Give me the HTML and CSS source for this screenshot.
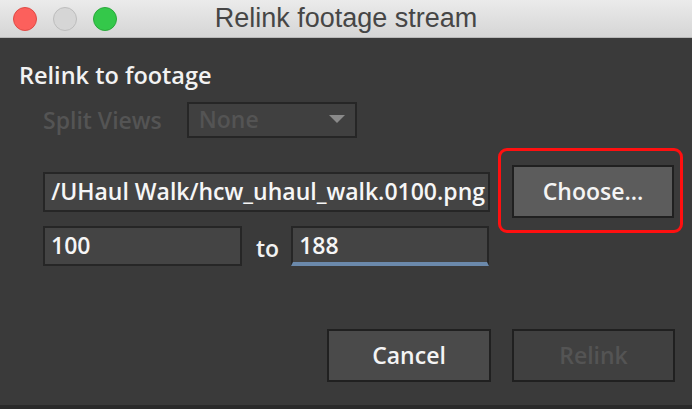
FILE: index.html
```
<!DOCTYPE html>
<html lang="en">
<head>
    <meta charset="UTF-8">
    <title>Relink footage stream</title>
    <link rel="stylesheet" href="styles.css">
</head>
<body>
    <div class="window">
        <div class="titlebar">
            <div class="lights">
                <span class="light close"></span>
                <span class="light minimize"></span>
                <span class="light zoom"></span>
            </div>
            <div class="title">Relink footage stream</div>
            <div></div>
        </div>

        <div class="dialog">
            <h2 class="heading">Relink to footage</h2>

            <div class="split-row">
                <span class="split-label">Split Views</span>
                <div class="select">
                    <span>None</span>
                    <svg class="arrow" width="16" height="8" viewBox="0 0 16 8"><path d="M0 0 L16 0 L8 8 Z" fill="#8a8a8a"/></svg>
                </div>
            </div>

            <div class="file-area">
                <div class="fields">
                    <div class="field path"><span>/UHaul Walk/hcw_uhaul_walk.0100.png</span></div>
                    <div class="range-row">
                        <div class="field start"><span>100</span></div>
                        <span class="to">to</span>
                        <div class="field end focused"><span>188</span></div>
                    </div>
                </div>
                <div class="highlight">
                    <button class="btn choose">Choose...</button>
                </div>
            </div>

            <div class="actions">
                <button class="btn cancel">Cancel</button>
                <button class="btn relink" disabled>Relink</button>
            </div>
        </div>
    </div>
</body>
</html>
```

FILE: styles.css
```
* { margin: 0; padding: 0; box-sizing: border-box; }
body { width: 692px; height: 409px; overflow: hidden; background: #2a2a2a; font-family: "Open Sans", sans-serif; }
.window { height: 405px; display: flex; flex-direction: column; background: #3a3a3a; }

.titlebar { height: 38px; flex-shrink: 0; display: grid; grid-template-columns: 1fr auto 1fr; align-items: center; background: linear-gradient(#ebebeb, #d5d5d5); border-bottom: 1px solid #b8b8b8; }
.lights { display: flex; gap: 16px; padding-left: 13px; }
.light { width: 24px; height: 24px; border-radius: 50%; }
.light.close { background: #fc605c; border: 1px solid #df4a45; }
.light.minimize { background: #d6d6d6; border: 1px solid #bdbdbd; }
.light.zoom { background: #34c84a; border: 1px solid #2aa83b; }
.title { font-family: "Liberation Sans", Arial, sans-serif; font-size: 27px; line-height: 32px; color: #464646; padding-bottom: 1px; }

.dialog { flex: 1; padding-left: 19px; }
.heading { margin-top: 21px; height: 32px; font-size: 23.5px; font-weight: 600; color: #f2f2f2; line-height: 32px; }

.split-row { display: flex; align-items: center; gap: 25px; height: 36px; margin: 11px 0 0 24px; }
.split-label { font-size: 23px; font-weight: 600; color: #545454; line-height: 32px; }
.select { width: 170px; height: 36px; display: flex; align-items: center; justify-content: space-between; padding: 0 9px 2px 10px; background: #404040; border: 2px solid #262626; font-size: 23px; font-weight: 600; color: #545454; line-height: 30px; }
.arrow { margin-right: 1px; }

.file-area { display: flex; align-items: flex-start; gap: 8px; margin: 10px 0 0 24px; }
.fields { width: 447px; padding-top: 24px; display: flex; flex-direction: column; gap: 14px; }
.field { height: 40px; display: flex; align-items: center; background: #444444; border: 2px solid #262626; color: #f6f6f6; font-size: 23px; font-weight: 600; line-height: 32px; overflow: hidden; white-space: nowrap; padding: 0 0 3px 6px; }
.field.path { justify-content: flex-end; padding: 0 3px 3px 0; }
.range-row { display: flex; align-items: center; }
.field.start { width: 199px; }
.field.end { width: 198px; padding-bottom: 0; }
.field.focused { border-bottom: 4px solid #6b89ab; }
.to { margin: 4px 12px 0 14px; color: #f2f2f2; font-size: 23px; font-weight: 600; line-height: 32px; }

.highlight { width: 185px; height: 85px; border: 3px solid #ff1010; border-radius: 9px; padding: 14px 6px 12px 11px; }

.btn { display: block; font-family: "Open Sans", sans-serif; font-size: 23px; font-weight: 600; line-height: 32px; color: #f4f4f4; border: 2px solid #202020; padding-bottom: 2px; }
.btn.choose { width: 100%; height: 53px; background: #5c5c5c; }

.actions { display: flex; justify-content: flex-end; gap: 21px; margin-top: 63px; padding-right: 17px; }
.btn.cancel { width: 164px; height: 53px; background: #4a4a4a; }
.btn.relink { width: 163px; height: 53px; background: #404040; color: #545454; }
```
